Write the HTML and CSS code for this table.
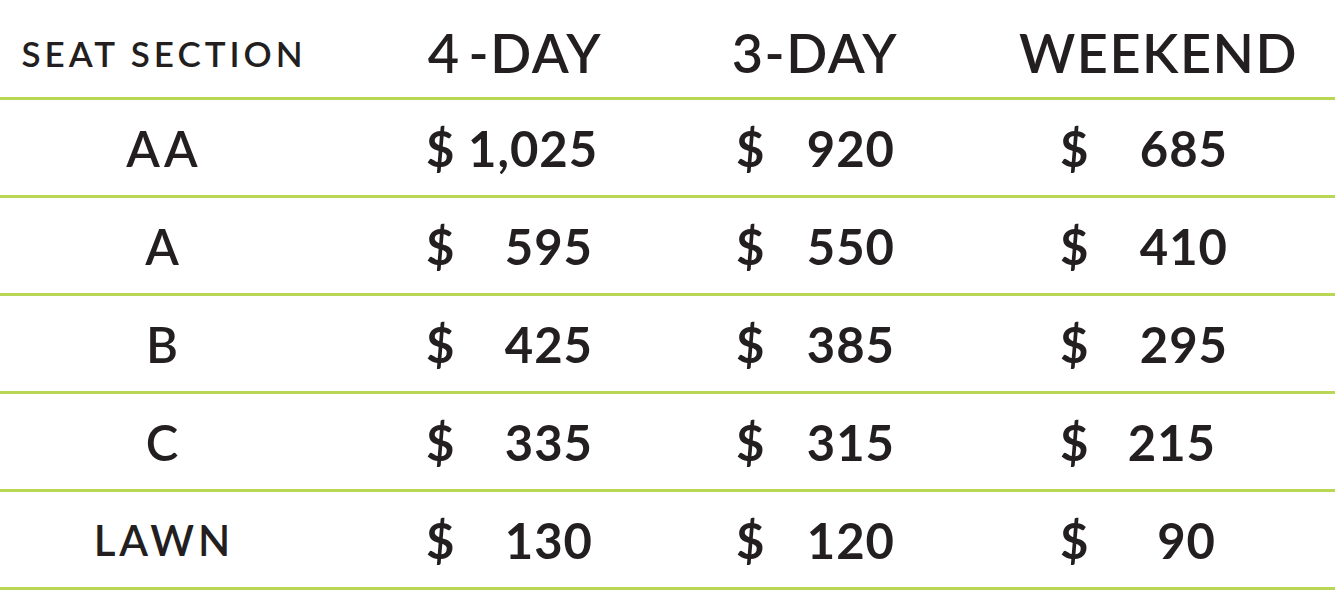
FILE: index.html
```html
<!DOCTYPE html>
<html lang="en">
<head>
<meta charset="utf-8">
<title>Seat Pricing</title>
<link rel="stylesheet" href="styles.css">
</head>
<body>
<div class="table">
  <div class="row head">
    <div class="cell label"><span class="seat-title">SEAT SECTION</span></div>
    <div class="cell hcol c2"><span class="htxt">4<span class="dash">-</span>DAY</span></div>
    <div class="cell hcol c3"><span class="htxt">3-DAY</span></div>
    <div class="cell hcol c4"><span class="htxt">WEEKEND</span></div>
  </div>
  <div class="row">
    <div class="cell label"><span class="sec">AA</span></div>
    <div class="cell price c2"><span class="cur">$</span><span class="amt">1,025</span></div>
    <div class="cell price c3"><span class="cur">$</span><span class="amt">920</span></div>
    <div class="cell price c4"><span class="cur">$</span><span class="amt">685</span></div>
  </div>
  <div class="row">
    <div class="cell label"><span class="sec">A</span></div>
    <div class="cell price c2"><span class="cur">$</span><span class="amt">595</span></div>
    <div class="cell price c3"><span class="cur">$</span><span class="amt">550</span></div>
    <div class="cell price c4"><span class="cur">$</span><span class="amt">410</span></div>
  </div>
  <div class="row">
    <div class="cell label"><span class="sec">B</span></div>
    <div class="cell price c2"><span class="cur">$</span><span class="amt">425</span></div>
    <div class="cell price c3"><span class="cur">$</span><span class="amt">385</span></div>
    <div class="cell price c4"><span class="cur">$</span><span class="amt">295</span></div>
  </div>
  <div class="row">
    <div class="cell label"><span class="sec">C</span></div>
    <div class="cell price c2"><span class="cur">$</span><span class="amt">335</span></div>
    <div class="cell price c3"><span class="cur">$</span><span class="amt">315</span></div>
    <div class="cell price c4"><span class="cur">$</span><span class="amt short">215</span></div>
  </div>
  <div class="row">
    <div class="cell label"><span class="sec lawn">LAWN</span></div>
    <div class="cell price c2"><span class="cur">$</span><span class="amt">130</span></div>
    <div class="cell price c3"><span class="cur">$</span><span class="amt">120</span></div>
    <div class="cell price c4"><span class="cur">$</span><span class="amt short">90</span></div>
  </div>
</div>
</body>
</html>
```

FILE: styles.css
```css
html, body {
  margin: 0;
  padding: 0;
  background: #ffffff;
}

body {
  font-family: "Lato", "Liberation Sans", sans-serif;
  color: #231f20;
  width: 1335px;
  height: 593px;
  overflow: hidden;
}

.table {
  display: flex;
  flex-direction: column;
}

.row {
  display: grid;
  grid-template-columns: 324px 382px 218px 411px;
  height: 95px;
  border-bottom: 3px solid #b9d657;
}

.row.head {
  height: 97px;
}

.cell {
  display: flex;
  align-items: center;
}

.head .cell {
  padding-top: 8px;
  box-sizing: border-box;
}

.label {
  justify-content: center;
}

.seat-title {
  font-size: 35px;
  font-weight: 600;
  letter-spacing: 4px;
  margin-right: -4px;
}

.hcol {
  justify-content: center;
}

.hcol.c4 {
  padding-left: 58px;
}

.htxt {
  font-size: 54px;
  font-weight: 600;
  letter-spacing: 1.5px;
}

.dash {
  margin-left: 8px;
}

.sec {
  font-size: 49px;
  font-weight: 600;
  letter-spacing: 4px;
  margin-right: -4px;
}

.sec.lawn {
  font-size: 42px;
}

.price {
  font-size: 49px;
  font-weight: 700;
}

.price.c2 {
  padding-left: 102px;
}

.price.c3 {
  padding-left: 30px;
}

.price.c4 {
  padding-left: 136px;
}

.cur {
  width: 42px;
}

.amt {
  text-align: right;
  letter-spacing: 1px;
}

.c2 .amt {
  width: 125px;
}

.c3 .amt {
  width: 117px;
}

.c4 .amt {
  width: 126px;
}

.c4 .amt.short {
  width: 114px;
}
```
